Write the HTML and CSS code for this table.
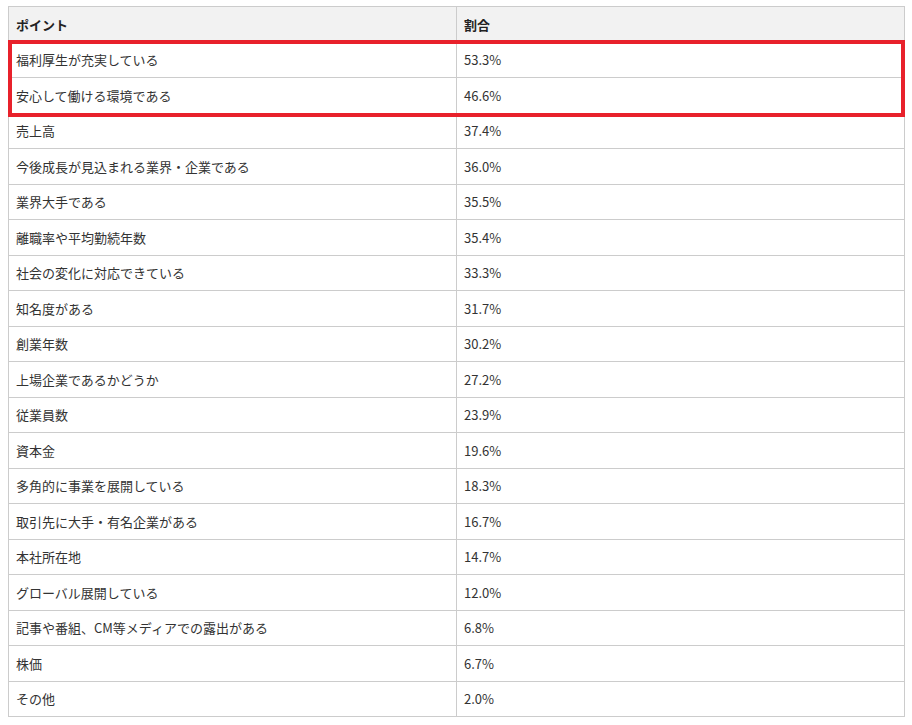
FILE: index.html
```html
<!DOCTYPE html>
<html lang="ja">
<head>
<meta charset="utf-8">
<link rel="stylesheet" href="styles.css">
</head>
<body>
<div class="wrap">
<table class="tbl">
<thead>
<tr><th>ポイント</th><th>割合</th></tr>
</thead>
<tbody>
<tr><td>福利厚生が充実している</td><td>53.3%</td></tr>
<tr><td>安心して働ける環境である</td><td>46.6%</td></tr>
<tr><td>売上高</td><td>37.4%</td></tr>
<tr><td>今後成長が見込まれる業界・企業である</td><td>36.0%</td></tr>
<tr><td>業界大手である</td><td>35.5%</td></tr>
<tr><td>離職率や平均勤続年数</td><td>35.4%</td></tr>
<tr><td>社会の変化に対応できている</td><td>33.3%</td></tr>
<tr><td>知名度がある</td><td>31.7%</td></tr>
<tr><td>創業年数</td><td>30.2%</td></tr>
<tr><td>上場企業であるかどうか</td><td>27.2%</td></tr>
<tr><td>従業員数</td><td>23.9%</td></tr>
<tr><td>資本金</td><td>19.6%</td></tr>
<tr><td>多角的に事業を展開している</td><td>18.3%</td></tr>
<tr><td>取引先に大手・有名企業がある</td><td>16.7%</td></tr>
<tr><td>本社所在地</td><td>14.7%</td></tr>
<tr><td>グローバル展開している</td><td>12.0%</td></tr>
<tr><td>記事や番組、CM等メディアでの露出がある</td><td>6.8%</td></tr>
<tr><td>株価</td><td>6.7%</td></tr>
<tr><td>その他</td><td>2.0%</td></tr>
</tbody>
</table>
<div class="highlight"></div>
</div>
</body>
</html>
```
FILE: styles.css
```css
html, body {
  margin: 0;
  padding: 0;
  background: #fff;
}
body {
  padding: 6px 8px 0 8px;
  font-family: "Noto Sans CJK JP", "Noto Sans", sans-serif;
  font-size: 13px;
  color: #333;
}
.wrap {
  position: relative;
  width: 897px;
}
.tbl {
  width: 897px;
  border-collapse: collapse;
  table-layout: fixed;
}
.tbl th, .tbl td {
  border: 1px solid #cccccc;
  padding: 7.5px 7px;
  line-height: 19.5px;
  text-align: left;
  vertical-align: middle;
  width: 50%;
}
.tbl th {
  background: #f2f2f2;
  font-weight: bold;
  color: #222;
}
.highlight {
  position: absolute;
  left: 0;
  top: 34px;
  width: 897px;
  height: 77px;
  border: 4px solid #e8212b;
  box-sizing: border-box;
  pointer-events: none;
}
```
